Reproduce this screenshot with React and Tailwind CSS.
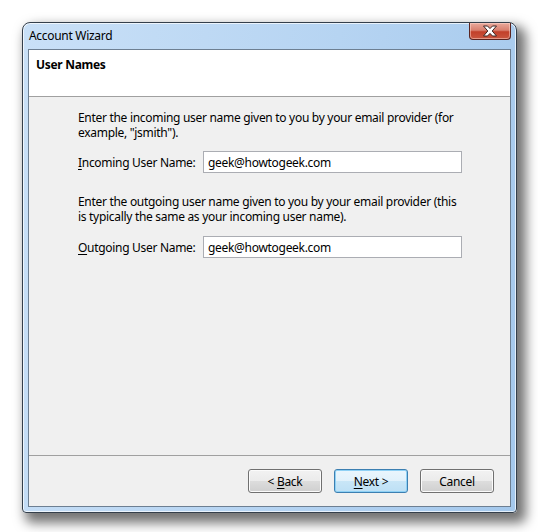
import React from 'react';

const font = { fontFamily: '"Noto Sans", "Open Sans", sans-serif' };

const CloseGlyph = () => (
  <svg width="16" height="12" viewBox="0 0 16 12">
    <path
      d="M1.5 1 H5.5 L8 3.6 L10.5 1 H14.5 L10.2 6 L14.5 11 H10.5 L8 8.4 L5.5 11 H1.5 L5.8 6 Z"
      fill="#ffffff"
      stroke="#3d2522"
      strokeWidth="1"
      strokeLinejoin="round"
    />
  </svg>
);

const Button = ({ children, primary }) => (
  <button
    className={
      'w-[74px] h-[24px] rounded-[3px] border text-[12px] text-black flex items-center justify-center ' +
      (primary
        ? 'border-[#3c7fb1] shadow-[inset_0_0_0_1px_#8fd1f5] bg-[linear-gradient(#eaf6fd_0%,#e1f1fb_50%,#c9e6f7_50%,#bde0f5_100%)]'
        : 'border-[#707070] shadow-[inset_0_0_0_1px_#fbfbfb] bg-[linear-gradient(#f2f2f2_0%,#ebebeb_50%,#dddddd_50%,#cfcfcf_100%)]')
    }
  >
    {children}
  </button>
);

const Field = ({ label, hotkey, value }) => (
  <div className="flex items-center h-[22px]">
    <span className="w-[125px]">
      <u className="underline-offset-2">{hotkey}</u>
      {label}
    </span>
    <div className="w-[259px] h-[22px] bg-white border border-[#abadb3] flex items-center pl-[4px]">
      {value}
    </div>
  </div>
);

export default function App() {
  return (
    <div className="min-h-screen bg-white pt-[22px] pl-[22px]" style={font}>
      <div className="w-[495px] h-[491px] flex flex-col rounded-t-[8px] rounded-b-[4px] border border-[#343f4b] bg-[linear-gradient(100deg,#c9e0f7_0%,#b6d4f2_55%,#a4c8ec_100%)] shadow-[inset_0_0_0_1px_rgba(255,255,255,0.7),6px_7px_12px_3px_rgba(0,0,0,0.55)]">
        {/* Title bar */}
        <div className="h-[26px] flex items-start justify-between">
          <span className="pl-[6px] pt-[5px] text-[12px] leading-[15px] tracking-[-0.3px] text-black">
            Account Wizard
          </span>
          <div className="mr-[5px] w-[42px] h-[17px] rounded-b-[4px] border border-t-0 border-[#5a2420] bg-[linear-gradient(#e9a99c_0%,#d8806f_45%,#c2402a_55%,#c9563f_100%)] shadow-[inset_0_0_0_1px_rgba(255,220,210,0.5)] flex items-center justify-center">
            <CloseGlyph />
          </div>
        </div>

        {/* Client area */}
        <div className="flex-1 mx-[5px] mb-[5px] border border-[#6d7f92] bg-[#f0f0f0] flex flex-col text-[12px] leading-[15px] tracking-[-0.3px] text-black">
          <div className="h-[47px] bg-white border-b border-[#a0a0a0] pl-[7px] pt-[7px]">
            <span className="font-bold">User Names</span>
          </div>

          <div className="flex-1 pl-[49px] pt-[13px]">
            <p className="w-[380px]">
              Enter the incoming user name given to you by your email provider (for example, "jsmith").
            </p>
            <div className="mt-[11px]">
              <Field hotkey="I" label="ncoming User Name:" value="geek@howtogeek.com" />
            </div>
            <p className="w-[380px] mt-[21px]">
              Enter the outgoing user name given to you by your email provider (this is typically the same as your incoming user name).
            </p>
            <div className="mt-[12px]">
              <Field hotkey="O" label="utgoing User Name:" value="geek@howtogeek.com" />
            </div>
          </div>

          <div className="h-[51px] border-t border-[#a0a0a0] flex justify-end items-start pt-[13px] pr-[16px] gap-[12px]">
            <Button>
              &lt;&nbsp;<u className="underline-offset-2">B</u>ack
            </Button>
            <Button primary>
              <u className="underline-offset-2">N</u>ext &gt;
            </Button>
            <Button>Cancel</Button>
          </div>
        </div>
      </div>
    </div>
  );
}
